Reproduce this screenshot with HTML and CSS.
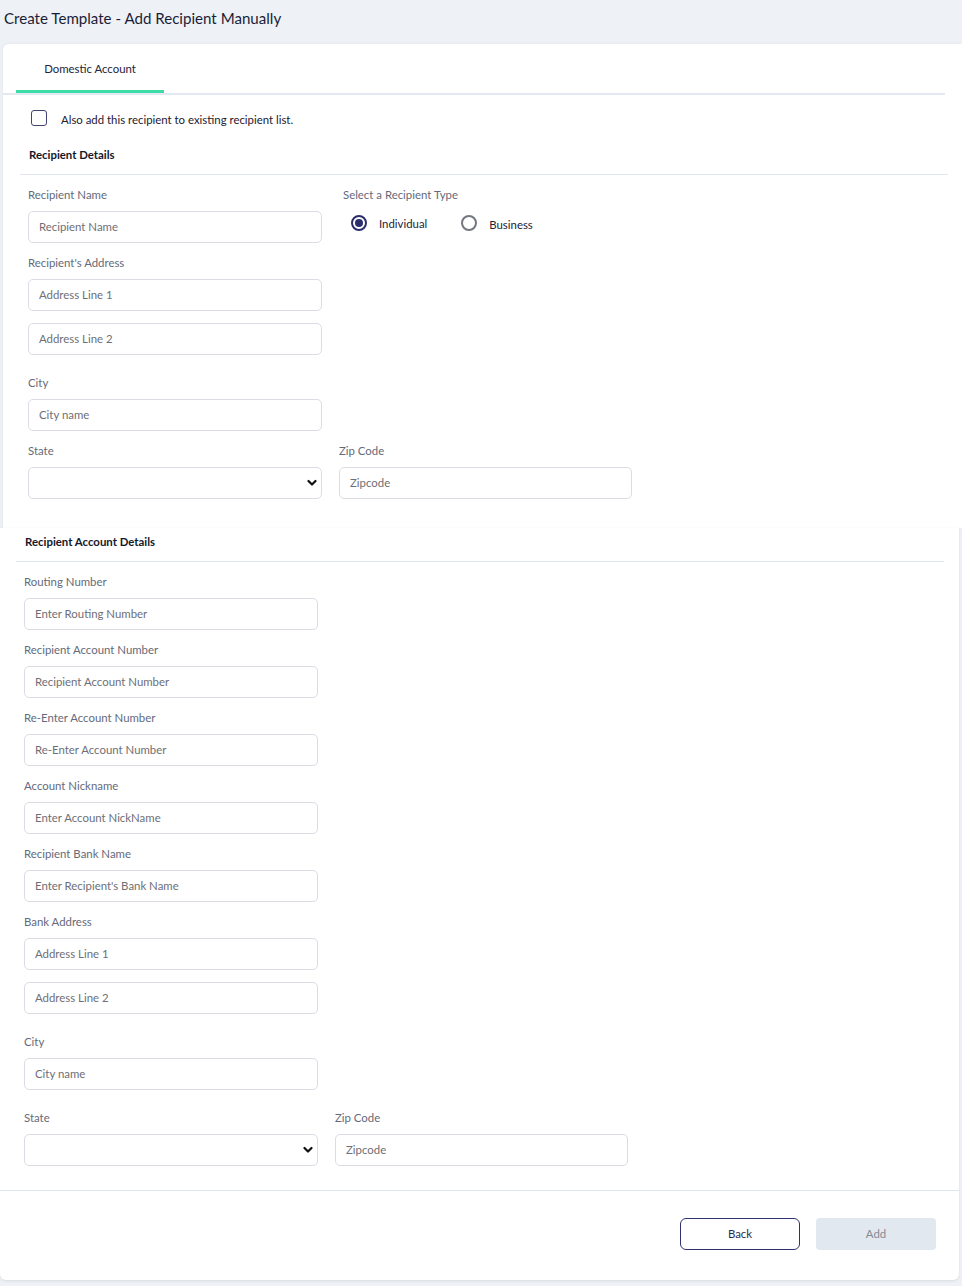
FILE: index.html
```html
<!DOCTYPE html>
<html lang="en">
<head>
<meta charset="utf-8">
<title>Create Template - Add Recipient Manually</title>
<link rel="stylesheet" href="styles.css">
</head>
<body>
<h1 class="page-title">Create Template - Add Recipient Manually</h1>

<div class="card card-top">
  <div class="tabbar">
    <div class="tab">Domestic Account</div>
  </div>
  <div class="card-body">
    <label class="check-row">
      <span class="checkbox"></span>
      <span class="check-text">Also add this recipient to existing recipient list.</span>
    </label>

    <div class="section-head">Recipient Details</div>
    <div class="form">
      <div class="row">
        <div class="group col">
          <div class="label">Recipient Name</div>
          <input class="input" placeholder="Recipient Name">
        </div>
        <div class="group col radio-group">
          <div class="label">Select a Recipient Type</div>
          <div class="radios">
            <span class="radio-item"><span class="radio on"></span><span class="radio-text">Individual</span></span>
            <span class="radio-item"><span class="radio"></span><span class="radio-text biz">Business</span></span>
          </div>
        </div>
      </div>
      <div class="group col wide-gap">
        <div class="label">Recipient's Address</div>
        <input class="input" placeholder="Address Line 1">
        <input class="input second" placeholder="Address Line 2">
      </div>
      <div class="group col">
        <div class="label">City</div>
        <input class="input" placeholder="City name">
      </div>
      <div class="row">
        <div class="group col">
          <div class="label">State</div>
          <div class="select"><svg class="chev" width="10" height="8" viewBox="0 0 10 8"><path d="M1.5 2 L5 5.5 L8.5 2" fill="none" stroke="#111" stroke-width="2.2" stroke-linecap="round" stroke-linejoin="round"/></svg></div>
        </div>
        <div class="group col">
          <div class="label">Zip Code</div>
          <input class="input" placeholder="Zipcode">
        </div>
      </div>
    </div>
  </div>
</div>

<div class="card card-bottom">
  <div class="section-head">Recipient Account Details</div>
  <div class="form">
    <div class="group col">
      <div class="label">Routing Number</div>
      <input class="input" placeholder="Enter Routing Number">
    </div>
    <div class="group col">
      <div class="label">Recipient Account Number</div>
      <input class="input" placeholder="Recipient Account Number">
    </div>
    <div class="group col">
      <div class="label">Re-Enter Account Number</div>
      <input class="input" placeholder="Re-Enter Account Number">
    </div>
    <div class="group col">
      <div class="label">Account Nickname</div>
      <input class="input" placeholder="Enter Account NickName">
    </div>
    <div class="group col">
      <div class="label">Recipient Bank Name</div>
      <input class="input" placeholder="Enter Recipient's Bank Name">
    </div>
    <div class="group col wide-gap">
      <div class="label">Bank Address</div>
      <input class="input" placeholder="Address Line 1">
      <input class="input second" placeholder="Address Line 2">
    </div>
    <div class="group col wide-gap">
      <div class="label">City</div>
      <input class="input" placeholder="City name">
    </div>
    <div class="row">
      <div class="group col">
        <div class="label">State</div>
        <div class="select"><svg class="chev" width="10" height="8" viewBox="0 0 10 8"><path d="M1.5 2 L5 5.5 L8.5 2" fill="none" stroke="#111" stroke-width="2.2" stroke-linecap="round" stroke-linejoin="round"/></svg></div>
      </div>
      <div class="group col">
        <div class="label">Zip Code</div>
        <input class="input" placeholder="Zipcode">
      </div>
    </div>
  </div>
  <div class="footer">
    <button class="btn btn-back">Back</button>
    <button class="btn btn-add">Add</button>
  </div>
</div>
</body>
</html>
```

FILE: styles.css
```css
* { box-sizing: border-box; }

body {
  margin: 0;
  background: #eef2f6;
  font-family: Lato, "Open Sans", sans-serif;
  color: #1f2433;
  height: 1286px;
  overflow: hidden;
}

.page-title {
  margin: 0;
  height: 44px;
  padding: 8px 4px 0;
  font-size: 15.1px;
  line-height: 20px;
  font-weight: 400;
  color: #1b1d38;
}

.card {
  background: #ffffff;
}

.card-top {
  margin-left: 3px;
  border-radius: 6px 0 0 0;
  box-shadow: 0 0 4px rgba(30, 40, 60, 0.06);
}

.tabbar {
  margin-right: 17px;
  padding-left: 13px;
  border-bottom: 2px solid #e4e9f1;
  display: flex;
}

.tab {
  width: 148px;
  height: 49px;
  border-bottom: 3px solid #3ddba6;
  display: flex;
  align-items: center;
  justify-content: center;
  padding-top: 2px;
  font-size: 11.4px;
  color: #22243a;
}

.card-body {
  padding: 0 14px 17px 17px;
}

.check-row {
  display: flex;
  align-items: center;
  margin-top: 15px;
  padding-left: 11px;
  height: 16px;
}

.checkbox {
  width: 16px;
  height: 16px;
  border: 1.5px solid #40446e;
  border-radius: 3px;
  flex: none;
}

.check-text {
  margin-left: 14px;
  margin-top: 3px;
  font-size: 11.4px;
  color: #1e2030;
}

.section-head {
  margin-top: 21px;
  padding: 0 0 11px 9px;
  font-size: 11.4px;
  line-height: 16px;
  font-weight: 700;
  color: #15172a;
  border-bottom: 1px solid #e1e6ee;
}

.card-bottom {
  width: 959px;
  padding: 6px 15px 0 16px;
  border-radius: 0 0 6px 6px;
  box-shadow: 0 1px 3px rgba(30, 40, 60, 0.10);
}

.card-bottom .section-head {
  margin-top: 0;
}

.form {
  padding: 12px 0 0 8px;
}

.card-bottom .form {
  padding-bottom: 12px;
}

.row {
  display: flex;
  gap: 17px;
}

.col {
  width: 294px;
}

.row .col + .col {
  width: 293px;
}

.group {
  display: flex;
  flex-direction: column;
  margin-bottom: 12px;
}

.group.wide-gap {
  margin-bottom: 20px;
}

.label {
  font-size: 11.4px;
  line-height: 16px;
  color: #656a7a;
  margin-bottom: 8px;
}

.input {
  display: block;
  width: 100%;
  height: 32px;
  border: 1px solid #dadde3;
  border-radius: 5px;
  padding: 0 10px 1px;
  font-family: inherit;
  font-size: 11.4px;
  color: #333;
  background: #fff;
  outline: none;
}

.input::placeholder {
  color: #6e6f76;
}

.input.second {
  margin-top: 12px;
}

.select {
  height: 32px;
  border: 1px solid #dadde3;
  border-radius: 5px;
  display: flex;
  align-items: center;
  justify-content: flex-end;
  padding-right: 4px;
}

.chev {
  display: block;
}

.radio-group {
  padding-left: 4px;
}

.radios {
  display: flex;
  align-items: center;
  padding-left: 8px;
  margin-top: 4px;
  height: 16px;
}

.radio-item {
  display: flex;
  align-items: center;
}

.radio-item + .radio-item {
  margin-left: 34px;
}

.radio {
  width: 16px;
  height: 16px;
  border: 2px solid #737780;
  border-radius: 50%;
  flex: none;
  display: flex;
  align-items: center;
  justify-content: center;
}

.radio.on {
  border-color: #2b2e6b;
}

.radio.on::after {
  content: "";
  width: 8px;
  height: 8px;
  border-radius: 50%;
  background: #2b2e6b;
}

.radio-text {
  margin-left: 12px;
  font-size: 11.4px;
  color: #1f2236;
}

.radio-text.biz {
  margin-top: 2px;
}

.footer {
  margin: 0 -15px 0 -16px;
  border-top: 1px solid #e1e6ee;
  padding: 27px 23px 30px;
  display: flex;
  justify-content: flex-end;
  gap: 16px;
}

.btn {
  width: 120px;
  height: 32px;
  padding: 0 0 1px;
  font-family: inherit;
  font-size: 11.4px;
  border-radius: 6px;
  cursor: pointer;
}

.btn-back {
  background: #fff;
  border: 1.5px solid #2e3270;
  color: #2a2d55;
}

.btn-add {
  background: #e2e8f0;
  border: none;
  border-radius: 4px;
  color: #858a94;
}
```
